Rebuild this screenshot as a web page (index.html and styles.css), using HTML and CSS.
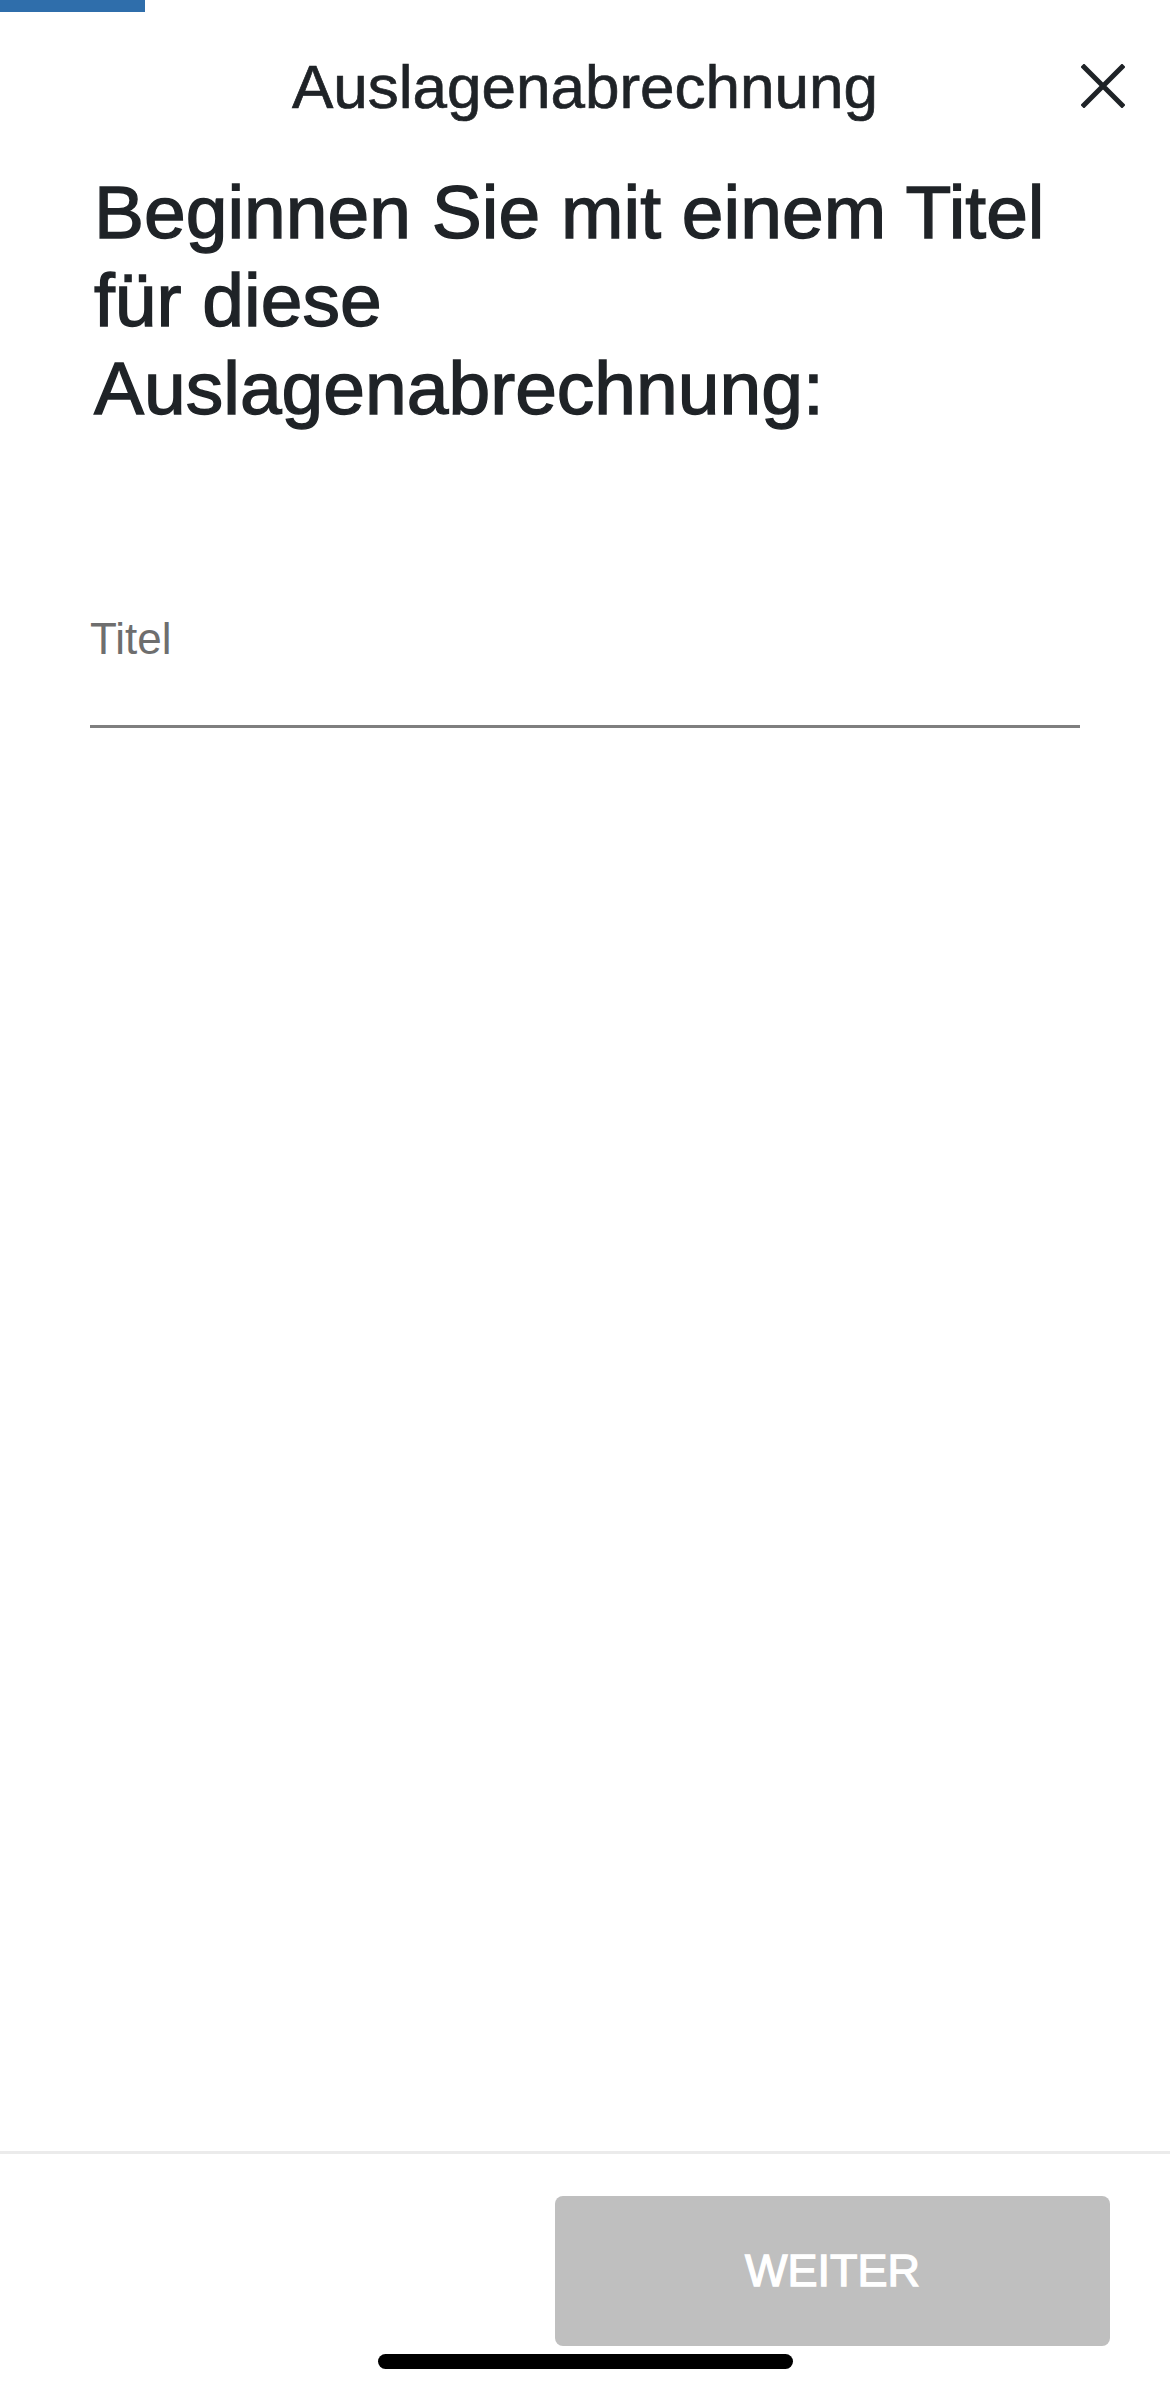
FILE: index.html
```html
<!DOCTYPE html>
<html lang="de">
<head>
    <meta charset="UTF-8">
    <meta name="viewport" content="width=device-width, initial-scale=1.0">
    <title>Auslagenabrechnung</title>
    <link rel="stylesheet" href="styles.css">
</head>
<body>
    <div class="screen">
        <div class="progress"><div class="progress-fill"></div></div>

        <header class="topbar">
            <span></span>
            <h1 class="topbar-title">Auslagenabrechnung</h1>
            <button class="close-btn" type="button" aria-label="Schließen">
                <svg width="44" height="44" viewBox="0 0 44 44">
                    <path d="M3 3 L41 41 M41 3 L3 41" stroke="#1f2327" stroke-width="5" stroke-linecap="square" fill="none"/>
                </svg>
            </button>
        </header>

        <main class="content">
            <h2 class="prompt">Beginnen Sie mit einem Titel für diese Auslagenabrechnung:</h2>

            <div class="field">
                <label for="title" class="field-label">Titel</label>
                <input id="title" class="field-input" type="text">
            </div>
        </main>

        <footer class="footer">
            <button class="next-btn" type="button" disabled>WEITER</button>
        </footer>

        <div class="home-indicator"></div>
    </div>
</body>
</html>
```

FILE: styles.css
```css
body {
    margin: 0;
    font-family: "Liberation Sans", Arial, sans-serif;
    color: #1f2327;
    background: #fff;
}

.screen {
    position: relative;
    width: 1170px;
    height: 2391px;
    display: flex;
    flex-direction: column;
    overflow: hidden;
}

.progress {
    height: 12px;
}
.progress-fill {
    width: 145px;
    height: 12px;
    background-color: #2f6eab;
}

.topbar {
    display: grid;
    grid-template-columns: 1fr auto 1fr;
    align-items: center;
    padding: 39px 45px 0 45px;
}
.topbar-title {
    margin: 0;
    font-size: 62px;
    line-height: 72px;
    font-weight: normal;
    -webkit-text-stroke: 0.7px #1f2327;
}
.close-btn {
    justify-self: end;
    width: 44px;
    height: 44px;
    padding: 0;
    border: none;
    background: none;
    margin-top: -2px;
}
.close-btn svg {
    display: block;
}

.content {
    flex: 1;
    padding: 0 90px;
}

.prompt {
    margin: 45px 0 0 4px;
    font-size: 75px;
    line-height: 88px;
    font-weight: normal;
    -webkit-text-stroke: 1.4px #1f2327;
}

.field {
    margin-top: 181px;
    display: flex;
    flex-direction: column;
}
.field-label {
    font-size: 44px;
    line-height: 52px;
    color: #6e6e6e;
}
.field-input {
    height: 60px;
    border: none;
    border-bottom: 3px solid #7f7f7f;
    padding: 0;
    font-size: 44px;
    font-family: inherit;
    outline: none;
}

.footer {
    border-top: 3px solid #ebebeb;
    padding: 42px 60px 45px 0;
    display: flex;
    justify-content: flex-end;
}
.next-btn {
    width: 555px;
    height: 150px;
    border: none;
    border-radius: 8px;
    background-color: #bfbfbf;
    color: #fff;
    font-family: inherit;
    font-size: 45px;
    -webkit-text-stroke: 1.3px #fff;
}

.home-indicator {
    position: absolute;
    left: 50%;
    bottom: 22px;
    width: 415px;
    height: 15px;
    margin-left: -207px;
    border-radius: 8px;
    background: #000;
}
```
